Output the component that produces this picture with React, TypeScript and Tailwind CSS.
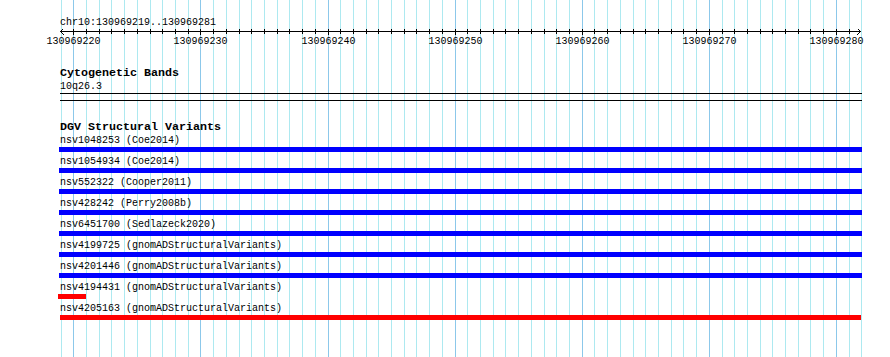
const LEFT = 60.6;
const STEP = 12.71;
const START = 219;

type Variant = { id: string; source: string; color: 'blue' | 'red'; bar: string };

const variants: Variant[] = [
  { id: 'nsv1048253', source: 'Coe2014', color: 'blue', bar: 'ml-[-1px] w-[803px]' },
  { id: 'nsv1054934', source: 'Coe2014', color: 'blue', bar: 'ml-[-1px] w-[803px]' },
  { id: 'nsv552322', source: 'Cooper2011', color: 'blue', bar: 'ml-[-1px] w-[803px]' },
  { id: 'nsv428242', source: 'Perry2008b', color: 'blue', bar: 'ml-[-1px] w-[803px]' },
  { id: 'nsv6451700', source: 'Sedlazeck2020', color: 'blue', bar: 'ml-[-1px] w-[803px]' },
  { id: 'nsv4199725', source: 'gnomADStructuralVariants', color: 'blue', bar: 'ml-[-1px] w-[803px]' },
  { id: 'nsv4201446', source: 'gnomADStructuralVariants', color: 'blue', bar: 'ml-[-1px] w-[803px]' },
  { id: 'nsv4194431', source: 'gnomADStructuralVariants', color: 'red', bar: 'ml-[-2px] w-[28px]' },
  { id: 'nsv4205163', source: 'gnomADStructuralVariants', color: 'red', bar: 'w-[801px]' },
];

// one line per base, darker every 10 bases
const gridX = Array.from({ length: 64 }, (_, k) => ({
  x: Math.round(LEFT + STEP * k) + 0.5,
  major: (START + k) % 10 === 0,
  base: START + k,
}));

function Grid() {
  return (
    <svg className="absolute inset-0" width={890} height={357} shapeRendering="crispEdges">
      {gridX.map((g) => (
        <line key={g.x} x1={g.x} x2={g.x} y1={0} y2={357} stroke={g.major ? '#8cc8ea' : '#ade9f0'} strokeWidth={1} />
      ))}
    </svg>
  );
}

function Ruler() {
  return (
    <svg className="block" width={890} height={38} viewBox="0 29 890 38" shapeRendering="crispEdges">
      <line x1={60} x2={861} y1={31.5} y2={31.5} stroke="#000" />
      <polyline points="64,28 60.5,31.5 64,35" fill="none" stroke="#000" shapeRendering="auto" />
      <polyline points="857,28 860.5,31.5 857,35" fill="none" stroke="#000" shapeRendering="auto" />
      {gridX.slice(1, 63).map((g) => (
        <line key={g.x} x1={g.x} x2={g.x} y1={g.major ? 28 : 29} y2={g.major ? 35 : 34} stroke="#000" />
      ))}
      {gridX
        .filter((g) => g.major)
        .map((g) => (
          <text
            key={g.base}
            x={g.x}
            y={43.5}
            textAnchor="middle"
            fontSize={10}
            fontFamily="'Liberation Mono', monospace"
            fill="#000"
          >
            {130969000 + g.base}
          </text>
        ))}
    </svg>
  );
}

export default function App() {
  return (
    <div className="relative w-[890px] h-[357px] overflow-hidden bg-white text-black font-['Liberation_Mono',monospace]">
      <Grid />
      <div className="relative">
        <div className="pl-[60px] pt-[16px] text-[10px] leading-[13px]">chr10:130969219..130969281</div>
        <Ruler />

        {/* Cytogenetic band track */}
        <div className="pl-[60px]">
          <div className="text-[11.67px] leading-[13px] font-bold">Cytogenetic Bands</div>
          <div className="text-[10px] leading-[13px]">10q26.3</div>
          <div className="w-[802px] h-px bg-black" />
          <div className="w-[802px] h-px bg-black mt-[6px]" />
        </div>

        {/* DGV track */}
        <div className="pl-[60px] mt-[20px]">
          <div className="text-[11.67px] leading-[13px] font-bold">DGV Structural Variants</div>
          <div className="flex flex-col gap-[3px]">
            {variants.map((v) => (
              <div key={v.id} className="flex flex-col">
                <div className="text-[10px] leading-[13px] whitespace-pre">
                  {v.id} ({v.source})
                </div>
                <div className={`h-[5px] ${v.bar} ${v.color === 'blue' ? 'bg-[#0000ff]' : 'bg-[#ff0000]'}`} />
              </div>
            ))}
          </div>
        </div>
      </div>
    </div>
  );
}
